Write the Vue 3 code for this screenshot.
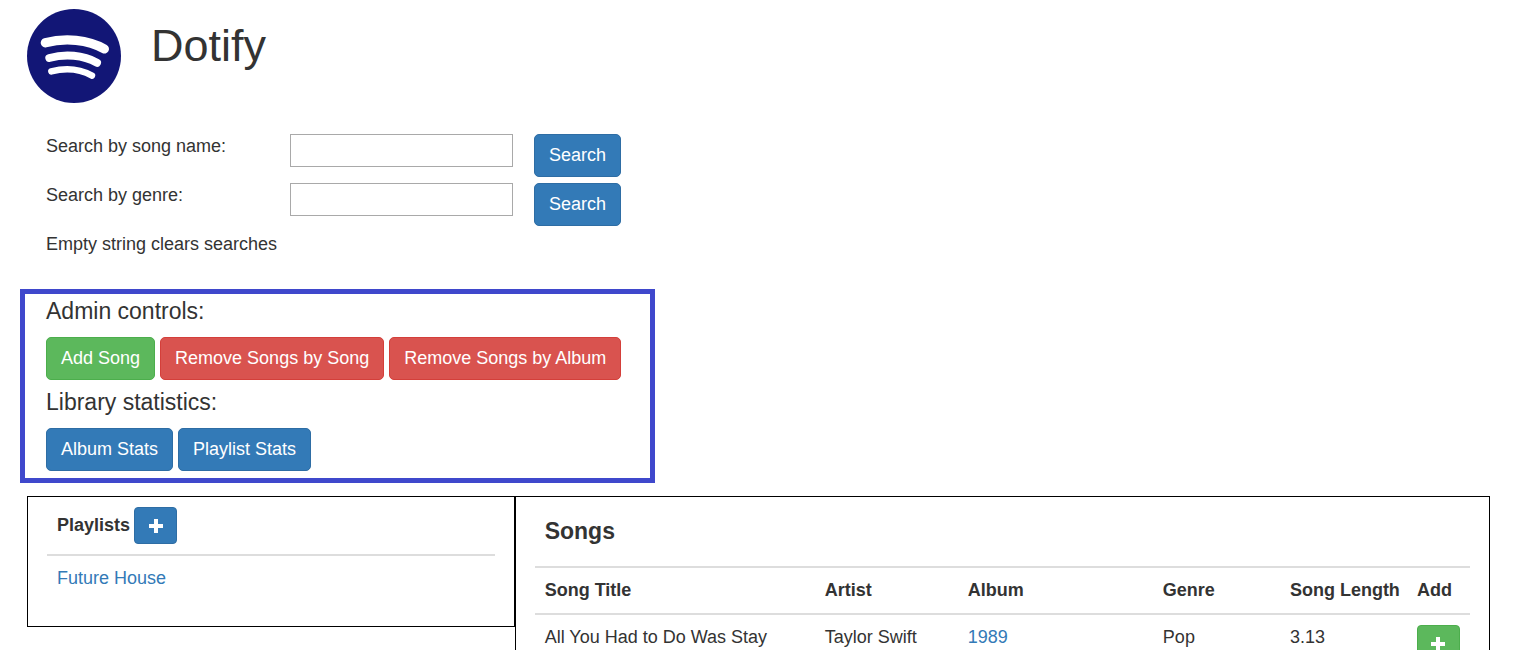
<script setup>
import { ref } from 'vue'

const songQuery = ref('')
const genreQuery = ref('')
const playlists = ['Future House']
const songs = [
  { title: 'All You Had to Do Was Stay', artist: 'Taylor Swift', album: '1989', genre: 'Pop', length: '3.13' },
]
</script>

<template>
  <div class="page">
    <header class="brand">
      <svg class="logo" viewBox="0 0 94 94" role="img" aria-label="Dotify logo">
        <circle cx="47" cy="47" r="47" fill="#121676" />
        <g fill="none" stroke="#fff" stroke-linecap="round">
          <path d="M18.3 33.8C38 28.5 61 30.5 77.4 40" stroke-width="9.2" />
          <path d="M22.3 49C38 44.7 56 46 70 53.7" stroke-width="8" />
          <path d="M24.3 62.4C38 58.8 53 60 65 66.6" stroke-width="6.4" />
        </g>
      </svg>
      <h1>Dotify</h1>
    </header>

    <main>
      <section class="search">
        <form class="search-row" @submit.prevent>
          <label for="song-name">Search by song name:</label>
          <input id="song-name" v-model="songQuery" type="text">
          <button class="btn primary" type="submit">Search</button>
        </form>
        <form class="search-row" @submit.prevent>
          <label for="genre">Search by genre:</label>
          <input id="genre" v-model="genreQuery" type="text">
          <button class="btn primary" type="submit">Search</button>
        </form>
        <p>Empty string clears searches</p>
      </section>

      <section class="admin">
        <h2>Admin controls:</h2>
        <div class="buttons">
          <button class="btn success" type="button">Add Song</button>
          <button class="btn danger" type="button">Remove Songs by Song</button>
          <button class="btn danger" type="button">Remove Songs by Album</button>
        </div>
        <h2>Library statistics:</h2>
        <div class="buttons">
          <button class="btn primary" type="button">Album Stats</button>
          <button class="btn primary" type="button">Playlist Stats</button>
        </div>
      </section>

      <div class="panels">
        <section class="panel">
          <table>
            <thead>
              <tr>
                <th scope="col">
                  <div class="playlist-head">
                    <span>Playlists</span>
                    <button class="btn primary icon" type="button" aria-label="Add playlist">
                      <svg viewBox="0 0 14 14" aria-hidden="true"><path d="M5 0h4v5h5v4H9v5H5V9H0V5h5z" /></svg>
                    </button>
                  </div>
                </th>
              </tr>
            </thead>
            <tbody>
              <tr v-for="name in playlists" :key="name">
                <td><a href="#">{{ name }}</a></td>
              </tr>
            </tbody>
          </table>
        </section>

        <section class="panel">
          <h3>Songs</h3>
          <table class="songs">
            <colgroup>
              <col class="c-title"><col class="c-artist"><col class="c-album">
              <col class="c-genre"><col class="c-length"><col class="c-add">
            </colgroup>
            <thead>
              <tr>
                <th scope="col">Song Title</th>
                <th scope="col">Artist</th>
                <th scope="col">Album</th>
                <th scope="col">Genre</th>
                <th scope="col">Song Length</th>
                <th scope="col">Add</th>
              </tr>
            </thead>
            <tbody>
              <tr v-for="song in songs" :key="song.title">
                <td>{{ song.title }}</td>
                <td>{{ song.artist }}</td>
                <td><a href="#">{{ song.album }}</a></td>
                <td>{{ song.genre }}</td>
                <td>{{ song.length }}</td>
                <td>
                  <button class="btn success icon" type="button" :aria-label="`Add ${song.title}`">
                    <svg viewBox="0 0 14 14" aria-hidden="true"><path d="M5 0h4v5h5v4H9v5H5V9H0V5h5z" /></svg>
                  </button>
                </td>
              </tr>
            </tbody>
          </table>
        </section>
      </div>
    </main>
  </div>
</template>

<style>
html {
  overflow: hidden;
  background: #fff;
}
</style>

<style scoped>
* {
  box-sizing: border-box;
}

.page {
  padding: 9px 48px 0 27px;
  color: #333;
  font: 18px/25px "Liberation Sans", Arial, sans-serif;
}

h1, h2, h3, p {
  margin: 0;
  font-weight: 400;
}

a {
  color: #337ab7;
  text-decoration: none;
}

.brand {
  display: flex;
  gap: 30px;
}

.logo {
  width: 94px;
  height: 94px;
}

h1 {
  margin-top: 12px;
  font-size: 45px;
  line-height: 50px;
}

.search {
  display: grid;
  gap: 6px;
  margin: 31px 0 32px 19px;
}

.search-row {
  display: grid;
  grid-template-columns: 223px 223px auto;
  gap: 21px;
  align-items: start;
  justify-content: start;
}

.search-row input {
  width: 100%;
  height: 33px;
  padding: 2px 4px;
  border: 1px solid #a9a9a9;
  color: inherit;
  font: inherit;
}

.btn {
  padding: 8px 14px;
  border: 1px solid;
  border-radius: 5px;
  color: #fff;
  font: inherit;
  white-space: nowrap;
  cursor: pointer;
}

.primary {
  border-color: #2e6da4;
  background: #337ab7;
}

.success {
  border-color: #4cae4c;
  background: #5cb85c;
}

.danger {
  border-color: #d43f3a;
  background: #d9534f;
}

.icon {
  display: flex;
  align-items: center;
  justify-content: center;
  width: 43px;
  height: 37px;
  padding: 0;
  border-radius: 4px;
}

.icon svg {
  width: 14px;
  height: 14px;
  fill: #fff;
}

.admin {
  width: 635px;
  max-width: 100%;
  margin-left: -7px;
  padding: 4px 21px 7px;
  border: 5px solid #3f48cc;
}

h2 {
  margin-bottom: 13px;
  font-size: 23px;
  line-height: 26px;
}

.buttons {
  display: flex;
  gap: 5px;
}

.buttons + h2 {
  margin-top: 9px;
}

.panels {
  display: grid;
  grid-template-columns: 1fr 2fr;
  align-items: start;
  margin-top: 13px;
}

.panel {
  min-width: 0;
  padding: 0 19px 25px;
  border: 1px solid #000;
}

table {
  width: 100%;
  border-spacing: 0;
}

th, td {
  padding: 10px;
  text-align: left;
  vertical-align: top;
}

th {
  border-bottom: 2px solid #ddd;
  white-space: nowrap;
}

.playlist-head {
  display: flex;
  align-items: center;
  gap: 4px;
}

h3 {
  padding: 22px 10px;
  font-size: 23px;
  font-weight: 700;
  line-height: 25px;
}

.songs {
  table-layout: fixed;
  border-top: 2px solid #ddd;
}

.c-title { width: 280px; }
.c-artist { width: 143px; }
.c-album { width: 195px; }
.c-genre, .c-length { width: 127px; }
.c-add { width: 63px; }
</style>
